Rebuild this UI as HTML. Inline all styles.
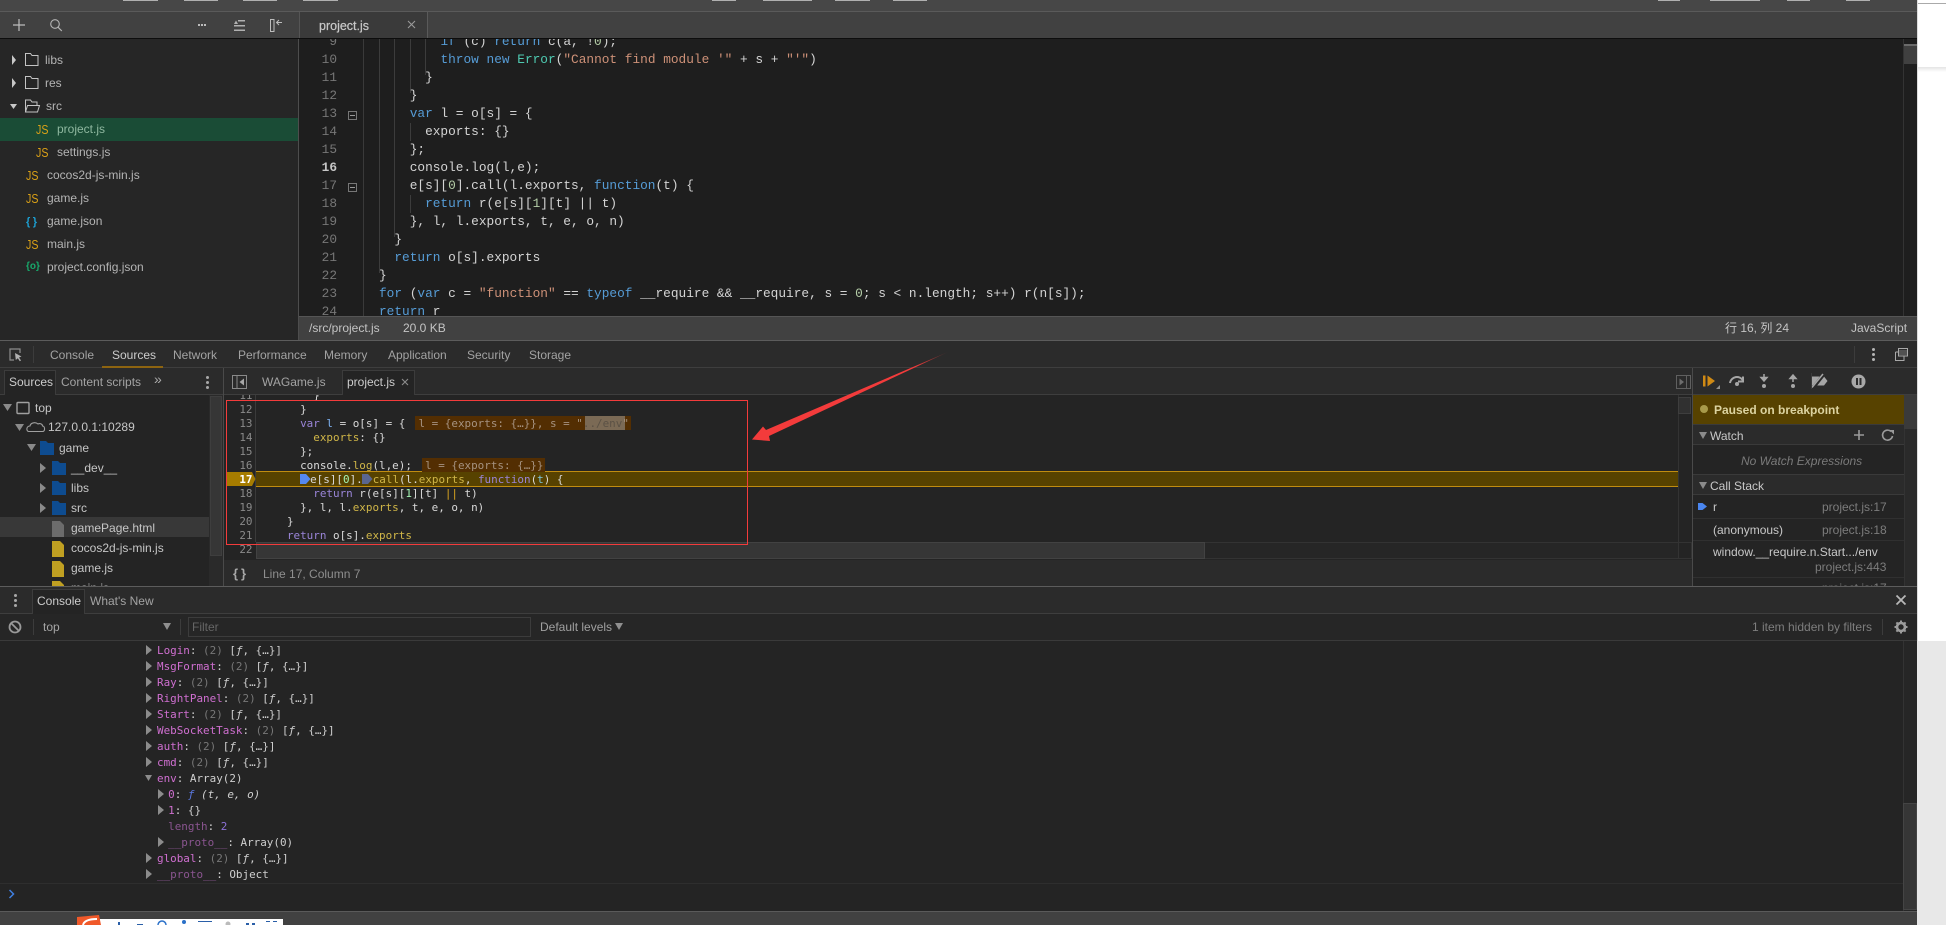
<!DOCTYPE html>
<html lang="en">
<head>
<meta charset="utf-8">
<title>DevTools</title>
<style>
html,body{margin:0;padding:0;width:1946px;height:925px;overflow:hidden;background:#fff}
body{position:relative;font-family:"Liberation Sans","Noto Sans CJK SC",sans-serif;font-size:12px;color:#aaa}
.a,.t,svg,pre{position:absolute}
.t{white-space:pre;line-height:16px;height:16px}
pre{margin:0;white-space:pre}
.b{position:absolute;overflow:hidden}
.ec{font-family:"Liberation Mono",monospace;font-size:12.8px;line-height:18px;color:#d4d4d4}
.dc{font-family:"DejaVu Sans Mono","Liberation Mono",monospace;font-size:10.93px;line-height:14px;color:#d9d9d9}
.cc{font-family:"DejaVu Sans Mono","Liberation Mono",monospace;font-size:10.93px;line-height:16px;color:#cfcfcf}
.k{color:#569cd6}.g{color:#4ec9b0}.s{color:#ce9178}.n{color:#b5cea8}
.K{color:#9a85d8}.v{color:#7fb4f5}.p{color:#d0b648}.N{color:#a4f4b4}.o{color:#d9a520}.T{color:#7cc8e0}
.m{color:#cf6fd0}.mm{color:#8a5590}.d{color:#777}.f{color:#5a78e0;font-style:italic}.i{font-style:italic}.l{color:#8d71d8}
.side{color:#b4b4b4;font-size:12px}
.tab{color:#a3a3a3;font-size:12px}
.grey{color:#7c7c7c}
.js{color:#d9a017;font-size:12.5px;transform:scaleX(.85);transform-origin:0 50%}
.st{color:#c4c4c4;font-size:12px;top:320px}
.top{position:absolute;top:0;height:1px;background:#b0b0b0}
</style>
</head>
<body>
<!-- right window background -->
<div class="a" style="left:1918px;top:3px;width:28px;height:1px;background:#aaa"></div>
<div class="a" style="left:1918px;top:67px;width:28px;height:5px;background:linear-gradient(#e4e4e4,#fff)"></div>
<div class="a" style="left:1917px;top:641px;width:29px;height:284px;background:#e8e8e8"></div>
<div class="a" style="left:1917px;top:0;width:1px;height:641px;background:#ddd"></div>

<div class="a" id="win" style="left:0;top:0;width:1917px;height:925px;background:#444;overflow:hidden">
  <!-- top strip -->
  <div class="a" style="left:0;top:0;width:1917px;height:12px;background:#474747;border-bottom:1px solid #5a5a5a;box-sizing:border-box"></div>
  <div class="top" style="left:123px;width:35px"></div>
  <div class="top" style="left:184px;width:34px"></div>
  <div class="top" style="left:243px;width:34px"></div>
  <div class="top" style="left:303px;width:35px"></div>
  <div class="top" style="left:712px;width:24px"></div>
  <div class="top" style="left:763px;width:49px"></div>
  <div class="top" style="left:835px;width:35px"></div>
  <div class="top" style="left:893px;width:34px"></div>
  <div class="top" style="left:1658px;width:22px"></div>
  <div class="top" style="left:1710px;width:50px"></div>
  <div class="top" style="left:1787px;width:23px"></div>
  <div class="top" style="left:1846px;width:24px"></div>

  <!-- sidebar toolbar -->
  <div class="a" style="left:0;top:12px;width:1917px;height:26px;background:#414141"></div>
  <div class="a" style="left:0;top:38px;width:1917px;height:1px;background:#0d0d0d"></div>
  <svg style="left:12px;top:18px" width="14" height="14" viewBox="0 0 14 14"><path d="M7 1v12M1 7h12" stroke="#bdbdbd" stroke-width="1.2" fill="none"/></svg>
  <svg style="left:49px;top:18px" width="14" height="14" viewBox="0 0 14 14"><circle cx="6" cy="6" r="4.3" stroke="#b5b5b5" stroke-width="1.1" fill="none"/><path d="M9 9.2l3.8 3.8" stroke="#b5b5b5" stroke-width="1.2"/></svg>
  <div class="a" style="left:198px;top:24px;width:8px;height:2px;background-image:linear-gradient(90deg,#bbb 2px,transparent 2px);background-size:3px 2px"></div>
  <svg style="left:233px;top:19px" width="13" height="13" viewBox="0 0 13 13"><path d="M5 1h7v1.5H5zM1 6h11v1.5H1zM1 10.500h11V12H1z" fill="#b0b0b0"/><path d="M3 1.500L5 5H1z" fill="#b0b0b0"/></svg>
  <svg style="left:269px;top:18px" width="15" height="15" viewBox="0 0 15 15"><rect x="1.500" y="1.500" width="3.500" height="12" stroke="#bdbdbd" stroke-width="1" fill="none"/><path d="M13 4.500H8M10 2L7.500 4.500 10 7" stroke="#bdbdbd" stroke-width="1" fill="none"/></svg>

  <!-- file tab -->
  <div class="a" style="left:299px;top:12px;width:129px;height:26px;background:#3a3a3a;border-left:1px solid #555;border-right:1px solid #5a5a5a;box-sizing:border-box"></div>
  <div class="t" style="left:319px;top:26px;margin-top:-8px;color:#c8c8c8;font-size:12.5px;-webkit-text-stroke:.2px #c8c8c8">project.js</div>
  <svg style="left:407px;top:30px;margin-top:-10px" width="9" height="9" viewBox="0 0 9 9"><path d="M1 1l7 7M8 1L1 8" stroke="#9a9a9a" stroke-width="1.1"/></svg>

  <!-- file tree -->
  <div class="a" style="left:0;top:39px;width:298px;height:301px;background:#262626"></div>
  <div class="a" style="left:0;top:118px;width:298px;height:23px;background:#1a4c36"></div>
  <div class="a" style="left:298px;top:39px;width:1px;height:301px;background:#4d4d4d"></div>
  <svg style="left:0;top:39px" width="298" height="240" viewBox="0 39 298 240">
    <path d="M12 55l4 5-4 5zM12 78l4 5-4 5z" fill="#c8c8c8"/>
    <path d="M10 104h7l-3.500 5z" fill="#c8c8c8"/>
    <path d="M25.500 53.500h5l1.500 2h6v10h-12.500zM25.500 76.500h5l1.500 2h6v10h-12.500z" stroke="#c4c4c4" fill="none"/>
    <path d="M25.500 112v-12h5l1.500 2h5v3M25.500 112l2-6.500h12l-2 6.500z" stroke="#c4c4c4" fill="none"/>
  </svg>
  <div class="t side" style="left:45px;top:52px">libs</div>
  <div class="t side" style="left:45px;top:75px">res</div>
  <div class="t side" style="left:46px;top:98px">src</div>
  <div class="t side" style="left:57px;top:121px;color:#8fb8a0">project.js</div>
  <div class="t side" style="left:57px;top:144px">settings.js</div>
  <div class="t side" style="left:47px;top:167px">cocos2d-js-min.js</div>
  <div class="t side" style="left:47px;top:190px">game.js</div>
  <div class="t side" style="left:47px;top:213px">game.json</div>
  <div class="t side" style="left:47px;top:236px">main.js</div>
  <div class="t side" style="left:47px;top:259px">project.config.json</div>
  <div class="t js" style="left:36px;top:122px">JS</div>
  <div class="t js" style="left:36px;top:145px">JS</div>
  <div class="t js" style="left:26px;top:168px">JS</div>
  <div class="t js" style="left:26px;top:191px">JS</div>
  <div class="t" style="left:26px;top:214px;color:#1d9ed0;font-size:11px;font-weight:bold;letter-spacing:2.500px">{}</div>
  <div class="t js" style="left:26px;top:237px">JS</div>
  <div class="t" style="left:26px;top:259px;color:#18a86b;font-size:10px;font-weight:bold">{o}</div>

  <!-- main editor -->
  <div class="b" style="left:299px;top:39px;width:1618px;height:277px;background:#1e1e1e">
    <pre class="ec" style="left:0;top:-6px;width:38px;text-align:right;color:#777"><span>9
10
11
12
13
14
15
</span><span style="color:#c6c6c6;font-weight:bold">16</span>
17
18
19
20
21
22
23
24</pre>
    <div class="a" style="left:64px;top:0;width:1px;height:277px;background:#3a3a3a"></div>
    <div class="a" style="left:80px;top:0;width:1px;height:234px;background:#3c3c3c"></div>
    <div class="a" style="left:95px;top:0;width:1px;height:198px;background:#3c3c3c"></div>
    <div class="a" style="left:111px;top:0;width:1px;height:54px;background:#3c3c3c"></div>
    <div class="a" style="left:111px;top:84px;width:1px;height:18px;background:#3c3c3c"></div>
    <div class="a" style="left:111px;top:156px;width:1px;height:18px;background:#3c3c3c"></div>
    <div class="a" style="left:126px;top:0;width:1px;height:36px;background:#3c3c3c"></div>
    <div class="a" style="left:49px;top:72px;width:9px;height:9px;border:1px solid #777;box-sizing:border-box"><div class="a" style="left:1px;top:3px;width:5px;height:1px;background:#999"></div></div>
    <div class="a" style="left:49px;top:144px;width:9px;height:9px;border:1px solid #777;box-sizing:border-box"><div class="a" style="left:1px;top:3px;width:5px;height:1px;background:#999"></div></div>
    <pre class="ec" style="left:80px;top:-6px">        <span class="k">if</span> (c) <span class="k">return</span> c(a, !<span class="n">0</span>);
        <span class="k">throw</span> <span class="k">new</span> <span class="g">Error</span>(<span class="s">"Cannot find module '"</span> + s + <span class="s">"'"</span>)
      }
    }
    <span class="k">var</span> l = o[s] = {
      exports: {}
    };
    console.log(l,e);
    e[s][<span class="n">0</span>].call(l.exports, <span class="k">function</span>(t) {
      <span class="k">return</span> r(e[s][<span class="n">1</span>][t] || t)
    }, l, l.exports, t, e, o, n)
  }
  <span class="k">return</span> o[s].exports
}
<span class="k">for</span> (<span class="k">var</span> c = <span class="s">"function"</span> == <span class="k">typeof</span> __require &amp;&amp; __require, s = <span class="n">0</span>; s &lt; n.length; s++) r(n[s]);
<span class="k">return</span> r</pre>
    <!-- scrollbar -->
    <div class="a" style="left:1604px;top:0;width:14px;height:277px;background:#1e1e1e;border-left:1px solid #333;box-sizing:border-box"></div>
    <div class="a" style="left:1605px;top:5px;width:13px;height:20px;background:#404040;border-top:2px solid #6a6a6a;box-sizing:border-box"></div>
  </div>

  <!-- editor status -->
  <div class="a" style="left:299px;top:316px;width:1618px;height:24px;background:#414141;border-top:1px solid #555;box-sizing:border-box"></div>
  <div class="t st" style="left:309px">/src/project.js</div>
  <div class="t st" style="left:403px">20.0 KB</div>
  <div class="t st" style="left:1725px">行 16, 列 24</div>
  <div class="t st" style="left:1851px">JavaScript</div>

  <!-- devtools -->
  <div class="a" style="left:0;top:340px;width:1917px;height:571px;background:#242424"></div>
  <div class="a" style="left:0;top:340px;width:1917px;height:1px;background:#5c5c5c"></div>
  <div class="a" style="left:0;top:341px;width:1917px;height:26px;background:#2b2b2b;border-bottom:1px solid #3e3e3e"></div>
  <svg style="left:8px;top:347px" width="15" height="16" viewBox="0 0 15 16"><path d="M6 13H2V2h10v4" stroke="#8d8d8d" fill="none" stroke-width="1.200"/><path d="M7 6l6.500 3.500-2.500 1 2 3-1.200.8-2-3-2 1.700z" fill="#b0b0b0"/></svg>
  <div class="a" style="left:33px;top:346px;width:1px;height:17px;background:#3c3c3c"></div>
  <div class="t tab" style="left:50px;top:347px">Console</div>
  <div class="t tab" style="left:112px;top:347px;color:#ccc">Sources</div>
  <div class="t tab" style="left:173px;top:347px">Network</div>
  <div class="t tab" style="left:238px;top:347px">Performance</div>
  <div class="t tab" style="left:324px;top:347px">Memory</div>
  <div class="t tab" style="left:388px;top:347px">Application</div>
  <div class="t tab" style="left:467px;top:347px">Security</div>
  <div class="t tab" style="left:529px;top:347px">Storage</div>
  <div class="a" style="left:102px;top:366px;width:61px;height:2px;background:#8d6410"></div>
  <div class="a" style="left:1854px;top:346px;width:1px;height:17px;background:#3c3c3c"></div>
  <div class="a" style="left:1872px;top:348px;width:3px;height:3px;background:#b5b5b5;border-radius:2px;box-shadow:0 5px 0 #b5b5b5,0 10px 0 #b5b5b5"></div>
  <svg style="left:1895px;top:348px" width="13" height="13" viewBox="0 0 13 13"><path d="M3.500.5h9v7.500h-9zM.5 4h3M.5 4v8.500h8.500V8" stroke="#a8a8a8" fill="none"/><rect x="4" y="2" width="8" height="5" fill="#a8a8a8" opacity=".3"/></svg>

  <!-- second row -->
  <div class="a" style="left:0;top:368px;width:1917px;height:26px;background:#2b2b2b;border-bottom:1px solid #3e3e3e"></div>
  <div class="a" style="left:4px;top:370px;width:52px;height:25px;background:#242424;border:1px solid #3c3c3c;border-bottom:0;box-sizing:border-box"></div>
  <div class="t tab" style="left:9px;top:374px;color:#ccc">Sources</div>
  <div class="t tab" style="left:61px;top:374px">Content scripts</div>
  <div class="t tab" style="left:154px;top:371px;font-size:14px;color:#aaa">»</div>
  <div class="a" style="left:206px;top:376px;width:3px;height:3px;background:#a8a8a8;border-radius:2px;box-shadow:0 5px 0 #a8a8a8,0 10px 0 #a8a8a8"></div>
  <div class="a" style="left:223px;top:368px;width:1px;height:218px;background:#4a4a4a"></div>
  <svg style="left:232px;top:375px" width="15" height="14" viewBox="0 0 15 14"><rect x=".5" y=".5" width="14" height="13" stroke="#8a8a8a" fill="none"/><path d="M5 .5v13" stroke="#8a8a8a"/><path d="M12 3.500v7L7.500 7z" fill="#a8a8a8"/></svg>
  <div class="t tab" style="left:262px;top:374px">WAGame.js</div>
  <div class="a" style="left:342px;top:370px;width:73px;height:25px;background:#242424;border:1px solid #3c3c3c;border-bottom:0;box-sizing:border-box"></div>
  <div class="t tab" style="left:347px;top:374px;color:#ccc">project.js</div>
  <svg style="left:401px;top:378px" width="8" height="8" viewBox="0 0 8 8"><path d="M1 1l6 6M7 1L1 7" stroke="#8b8b8b" stroke-width="1.100"/></svg>
  <svg style="left:1676px;top:375px" width="15" height="14" viewBox="0 0 15 14"><rect x=".5" y=".5" width="14" height="13" stroke="#606060" fill="none"/><path d="M10.500.5v13" stroke="#606060"/><path d="M3.500 3.500v7L8 7z" fill="#6d6d6d"/></svg>

  <!-- navigator tree -->
  <div class="a" style="left:0;top:395px;width:223px;height:191px;background:#242424;overflow:hidden">
    <div class="a" style="left:0;top:122px;width:209px;height:20px;background:#383838"></div>
    <svg style="left:0;top:0" width="209" height="191" viewBox="0 395 209 191">
      <path d="M3 404h9l-4.500 7zM15 424h9l-4.500 7zM27 444h9l-4.500 7z" fill="#8a8a8a"/>
      <path d="M40 463v10l6-5zM40 483v10l6-5zM40 503v10l6-5z" fill="#8a8a8a"/>
      <rect x="17" y="402.500" width="12" height="11" rx="1" stroke="#a0a0a0" stroke-width="1.400" fill="none"/>
      <path d="M29 431.500c-3 0-3-5.500 1-5.500.5-3 5-4.500 8-2 2-1 4.500 0 4.500 2 2.500 0 3 5.500 0 5.500z" stroke="#a0a0a0" stroke-width="1.100" fill="none"/>
      <path d="M40 441h6l2 2h6v12H40zM52 461h6l2 2h6v12H52zM52 481h6l2 2h6v12H52zM52 501h6l2 2h6v12H52z" fill="#0e4c90"/>
      <path d="M52 521h8l4 4v12H52z" fill="#6c6c6c"/>
      <path d="M52 541h8l4 4v12H52zM52 561h8l4 4v12H52zM52 581h8l4 4v12H52z" fill="#c0a022"/>
    </svg>
    <div class="t" style="left:35px;top:5px;color:#c6c6c6">top</div>
    <div class="t" style="left:48px;top:24px;color:#c6c6c6">127.0.0.1:10289</div>
    <div class="t" style="left:59px;top:45px;color:#c6c6c6">game</div>
    <div class="t" style="left:71px;top:65px;color:#c6c6c6">__dev__</div>
    <div class="t" style="left:71px;top:85px;color:#c6c6c6">libs</div>
    <div class="t" style="left:71px;top:105px;color:#c6c6c6">src</div>
    <div class="t" style="left:71px;top:125px;color:#c6c6c6">gamePage.html</div>
    <div class="t" style="left:71px;top:145px;color:#c6c6c6">cocos2d-js-min.js</div>
    <div class="t" style="left:71px;top:165px;color:#c6c6c6">game.js</div>
    <div class="t" style="left:71px;top:185px;color:#c6c6c6">main.js</div>
    <div class="a" style="left:209px;top:0;width:14px;height:191px;background:#2a2a2a"></div>
    <div class="a" style="left:210px;top:1px;width:12px;height:160px;background:#363636;border:1px solid #3e3e3e;box-sizing:border-box"></div>
  </div>

  <!-- sources editor -->
  <div class="b" style="left:224px;top:395px;width:1468px;height:165px;background:#242424">
    <div class="a" style="left:31px;top:0;width:1px;height:147px;background:#3a3a3a"></div>
    <pre class="dc" style="left:0;top:-6.5px;width:28.500px;text-align:right;color:#8a8a8a">11
12
13
14
15
16

18
19
20
21
22</pre>
    <!-- paused line -->
    <div class="a" style="left:32px;top:76px;width:1436px;height:16px;background:#574200;border-top:1px solid #c08c10;border-bottom:1px solid #c08c10;box-sizing:border-box"></div>
    <svg style="left:3px;top:77px" width="30" height="14" viewBox="0 0 30 14"><path d="M0 0h25l3.500 7-3.500 7H0z" fill="#a67c00"/></svg>
    <pre class="dc" style="left:0;top:-6.5px;width:28.500px;text-align:right;color:#fff;font-weight:bold">






17</pre>
    <!-- inline values -->
    <div class="a" style="left:191px;top:21px;width:216px;height:14px;background:#532e02"></div>
    <div class="a" style="left:361px;top:21px;width:40px;height:14px;background:#7b6a55"></div>
    <div class="a" style="left:198px;top:63px;width:123px;height:14px;background:#532e02"></div>
    <pre class="dc" style="left:49.800px;top:-6.500px">      }
    }
    <span class="K">var</span> <span class="v">l</span> = o[s] = {  <span style="color:#a59280">l = {exports: {…}}, s = "</span><span style="color:#5b5145">../env</span><span style="color:#a59280">"</span>
      <span class="p">exports</span>: {}
    };
    console.<span class="p">log</span>(l,e);  <span style="color:#a59280">l = {exports: {…}}</span></pre>
    <pre class="dc" style="left:49.800px;top:-6.500px"><span style="visibility:hidden">
 
 
 
 
 
</span>    <span style="display:inline-block;width:10px"></span>e[s][<span class="N">0</span>].<span style="display:inline-block;width:10px"></span><span class="p">call</span>(l.<span class="p">exports</span>, <span class="K">function</span>(<span class="T">t</span>) {
      <span class="K">return</span> r(e[s][<span class="N">1</span>][t] <span class="o">||</span> t)
    }, l, l.<span class="p">exports</span>, t, e, o, n)
  }
  <span class="K">return</span> o[s].<span class="p">exports</span></pre>
    <svg style="left:76px;top:78px" width="11" height="12" viewBox="0 0 11 12"><path d="M0 1h6l4.500 5L6 11H0z" fill="#5588f0"/></svg>
    <svg style="left:138px;top:78px" width="11" height="12" viewBox="0 0 11 12"><path d="M0 1h6l4.500 5L6 11H0z" fill="#5a6690"/></svg>
    <!-- scroll bars -->
    <div class="a" style="left:1454px;top:0;width:14px;height:147px;background:#242424;border-left:1px solid #333;box-sizing:border-box"></div>
    <div class="a" style="left:1454px;top:2px;width:13px;height:17px;background:#303030;border:1px solid #3e3e3e;box-sizing:border-box"></div>
    <div class="a" style="left:32px;top:147px;width:1422px;height:17px;background:#262626;border-top:1px solid #333;border-bottom:1px solid #333;box-sizing:border-box"></div>
    <div class="a" style="left:32px;top:147px;width:949px;height:17px;background:#363636;border:1px solid #424242;box-sizing:border-box"></div>
    <div class="a" style="left:1454px;top:147px;width:14px;height:17px;background:#242424;border:1px solid #333;box-sizing:border-box"></div>
  </div>
  <div class="a" style="left:224px;top:560px;width:1468px;height:26px;background:#2b2b2b"></div>
  <div class="t" style="left:233px;top:566px;color:#a8a8a8;font-size:13px;font-weight:bold;letter-spacing:3px">{}</div>
  <div class="t grey" style="left:263px;top:566px;color:#8f8f8f">Line 17, Column 7</div>

  <!-- debugger sidebar -->
  <div class="a" style="left:1692px;top:368px;width:1px;height:218px;background:#4a4a4a"></div>
  <svg style="left:1700px;top:372px" width="130" height="18" viewBox="0 0 130 18">
    <path d="M3 3.500h2.500v11H3zM7.500 3.500L15 9l-7.500 5.500z" fill="#d08a14"/><path d="M20 17l-4 0 4-4z" fill="#909090"/>
    <path d="M30 11a7 7 0 0 1 13-2.500M43 4.500v5h-5" stroke="#a6a6a6" stroke-width="2" fill="none"/><circle cx="37" cy="12" r="2" fill="#a6a6a6"/>
    <path d="M64 2v6M61 5.500L64 9l3-3.500z" stroke="#a6a6a6" stroke-width="1.500" fill="#a6a6a6"/><circle cx="64" cy="14" r="2" fill="#a6a6a6"/>
    <path d="M93 10V4M90 6.500L93 3l3 3.500z" stroke="#a6a6a6" stroke-width="1.500" fill="#a6a6a6"/><circle cx="93" cy="14" r="2" fill="#a6a6a6"/>
    <path d="M111 4.500h13l3.500 4.500-3.500 4.500h-13z" fill="#a6a6a6"/><path d="M113 16L124 2" stroke="#2b2b2b" stroke-width="3.500"/><path d="M112 15.500L123 2" stroke="#a6a6a6" stroke-width="1.500"/>
  </svg>
  <div class="a" style="left:1811px;top:373px;width:1px;height:16px;background:#3c3c3c"></div>
  <svg style="left:1851px;top:374px" width="15" height="15" viewBox="0 0 15 15"><circle cx="7.500" cy="7.500" r="7" fill="#a8a8a8"/><path d="M5 4h2v7H5zM8.500 4h2v7h-2z" fill="#2b2b2b"/></svg>

  <div class="a" style="left:1693px;top:395px;width:224px;height:191px;background:#242424;overflow:hidden">
    <div class="a" style="left:0;top:0;width:211px;height:29px;background:#574200"></div>
    <div class="a" style="left:7px;top:10px;width:8px;height:8px;border-radius:50%;background:#a89a4a"></div>
    <div class="t" style="left:21px;top:7px;font-weight:bold;color:#dcd3a0">Paused on breakpoint</div>
    <div class="a" style="left:0;top:29px;width:211px;height:21px;background:#2b2b2b;border-top:1px solid #3a3a3a;border-bottom:1px solid #3a3a3a;box-sizing:border-box"></div>
    <svg style="left:6px;top:37px" width="8" height="7" viewBox="0 0 8 7"><path d="M0 0h8L4 7z" fill="#8a8a8a"/></svg>
    <div class="t" style="left:17px;top:33px;color:#c8c8c8">Watch</div>
    <svg style="left:159px;top:33px" width="14" height="14" viewBox="0 0 14 14"><path d="M7 2v10M2 7h10" stroke="#9a9a9a" stroke-width="1.600"/></svg>
    <svg style="left:188px;top:33px" width="14" height="14" viewBox="0 0 14 14"><path d="M11.500 8A5 5 0 1 1 10 3.500" stroke="#9a9a9a" stroke-width="1.600" fill="none"/><path d="M8.500 2h4.500v4.500z" fill="#9a9a9a"/></svg>
    <div class="t i" style="left:48px;top:58px;color:#7a7a7a">No Watch Expressions</div>
    <div class="a" style="left:0;top:79px;width:211px;height:21px;background:#2b2b2b;border-top:1px solid #3a3a3a;border-bottom:1px solid #3a3a3a;box-sizing:border-box"></div>
    <svg style="left:6px;top:87px" width="8" height="7" viewBox="0 0 8 7"><path d="M0 0h8L4 7z" fill="#8a8a8a"/></svg>
    <div class="t" style="left:17px;top:83px;color:#c8c8c8">Call Stack</div>
    <svg style="left:5px;top:107px" width="9" height="9" viewBox="0 0 9 9"><path d="M0 1h4.500L9 4.500 4.500 8H0z" fill="#4a86f0"/></svg>
    <div class="t" style="left:20px;top:104px;color:#c8c8c8">r</div>
    <div class="t grey" style="left:129px;top:104px">project.js:17</div>
    <div class="a" style="left:0;top:123px;width:211px;height:1px;background:#303030"></div>
    <div class="t" style="left:20px;top:127px;color:#c8c8c8">(anonymous)</div>
    <div class="t grey" style="left:129px;top:127px">project.js:18</div>
    <div class="a" style="left:0;top:145px;width:211px;height:1px;background:#303030"></div>
    <div class="t" style="left:20px;top:149px;color:#c8c8c8">window.__require.n.Start.../env</div>
    <div class="t grey" style="left:122px;top:164px">project.js:443</div>
    <div class="a" style="left:0;top:182px;width:211px;height:1px;background:#303030"></div>
    <div class="t grey" style="left:129px;top:185px">project.js:17</div>
    <div class="a" style="left:211px;top:0;width:13px;height:191px;background:#2a2a2a;border-left:1px solid #333;box-sizing:border-box"></div>
    <div class="a" style="left:211px;top:0;width:13px;height:34px;background:#3a3a3a"></div>
  </div>

  <!-- drawer -->
  <div class="a" style="left:0;top:586px;width:1917px;height:1px;background:#5c5c5c"></div>
  <div class="a" style="left:0;top:587px;width:1917px;height:26px;background:#2b2b2b;border-bottom:1px solid #3e3e3e"></div>
  <div class="a" style="left:14px;top:594px;width:3px;height:3px;background:#a8a8a8;border-radius:2px;box-shadow:0 5px 0 #a8a8a8,0 10px 0 #a8a8a8"></div>
  <div class="a" style="left:32px;top:589px;width:53px;height:25px;background:#242424;border:1px solid #3c3c3c;border-bottom:0;box-sizing:border-box"></div>
  <div class="t tab" style="left:37px;top:593px;color:#ccc">Console</div>
  <div class="t tab" style="left:90px;top:593px">What's New</div>
  <svg style="left:1895px;top:594px" width="12" height="12" viewBox="0 0 12 12"><path d="M1.500 1.500l9 9M10.500 1.500l-9 9" stroke="#b8b8b8" stroke-width="1.800"/></svg>

  <div class="a" style="left:0;top:614px;width:1917px;height:27px;background:#262626;border-bottom:1px solid #3a3a3a;box-sizing:border-box"></div>
  <svg style="left:8px;top:620px" width="14" height="14" viewBox="0 0 14 14"><circle cx="7" cy="7" r="5.500" stroke="#999" stroke-width="1.800" fill="none"/><path d="M3 3l8 8" stroke="#999" stroke-width="1.800"/></svg>
  <div class="a" style="left:33px;top:619px;width:1px;height:16px;background:#3c3c3c"></div>
  <div class="t grey" style="left:43px;top:619px;color:#a5a5a5">top</div>
  <svg style="left:163px;top:623px" width="8" height="7" viewBox="0 0 8 7"><path d="M0 0h8L4 7z" fill="#8f8f8f"/></svg>
  <div class="a" style="left:180px;top:619px;width:1px;height:16px;background:#3c3c3c"></div>
  <div class="a" style="left:188px;top:617px;width:343px;height:20px;background:#262626;border:1px solid #3c3c3c;box-sizing:border-box"></div>
  <div class="t" style="left:192px;top:619px;color:#666">Filter</div>
  <div class="t" style="left:540px;top:619px;color:#a0a0a0">Default levels</div>
  <svg style="left:615px;top:623px" width="8" height="7" viewBox="0 0 8 7"><path d="M0 0h8L4 7z" fill="#8f8f8f"/></svg>
  <div class="t" style="left:1752px;top:619px;color:#7e7e7e">1 item hidden by filters</div>
  <div class="a" style="left:1882px;top:619px;width:1px;height:16px;background:#3c3c3c"></div>
  <svg style="left:1894px;top:620px" width="14" height="14" viewBox="0 0 14 14"><circle cx="7" cy="7" r="4" fill="none" stroke="#9c9c9c" stroke-width="2.600"/><path d="M7 .5v3M7 10.500v3M.5 7h3M10.500 7h3M2.400 2.400l2.100 2.100M9.500 9.500l2.100 2.100M2.400 11.600l2.100-2.100M9.500 4.500l2.100-2.100" stroke="#9c9c9c" stroke-width="2"/></svg>

  <!-- console output -->
  <div class="a" style="left:0;top:641px;width:1917px;height:270px;background:#242424"></div>
  <pre class="cc" style="left:157px;top:643px"><span class="m">Login</span>: <span class="d">(2)</span> [<span class="i">ƒ</span>, {…}]
<span class="m">MsgFormat</span>: <span class="d">(2)</span> [<span class="i">ƒ</span>, {…}]
<span class="m">Ray</span>: <span class="d">(2)</span> [<span class="i">ƒ</span>, {…}]
<span class="m">RightPanel</span>: <span class="d">(2)</span> [<span class="i">ƒ</span>, {…}]
<span class="m">Start</span>: <span class="d">(2)</span> [<span class="i">ƒ</span>, {…}]
<span class="m">WebSocketTask</span>: <span class="d">(2)</span> [<span class="i">ƒ</span>, {…}]
<span class="m">auth</span>: <span class="d">(2)</span> [<span class="i">ƒ</span>, {…}]
<span class="m">cmd</span>: <span class="d">(2)</span> [<span class="i">ƒ</span>, {…}]
<span class="m">env</span>: Array(2)
  <span class="m" style="margin-left:-2px">0</span>: <span class="f">ƒ</span> <span class="i">(t, e, o)</span>
  <span class="m" style="margin-left:-2px">1</span>: {}
  <span class="mm" style="margin-left:-2px">length</span>: <span class="l">2</span>
  <span class="mm" style="margin-left:-2px">__proto__</span>: Array(0)
<span class="m">global</span>: <span class="d">(2)</span> [<span class="i">ƒ</span>, {…}]
<span class="mm">__proto__</span>: Object</pre>
  <svg style="left:145px;top:642px" width="30" height="240" viewBox="0 642 30 240">
    <path d="M1 645l6 5-6 5zM1 661l6 5-6 5zM1 677l6 5-6 5zM1 693l6 5-6 5zM1 709l6 5-6 5zM1 725l6 5-6 5zM1 741l6 5-6 5zM1 757l6 5-6 5zM1 853l6 5-6 5zM1 869l6 5-6 5z" fill="#8c8c8c"/>
    <path d="M0 775h7l-3.500 6z" fill="#8c8c8c"/>
    <path d="M13 789l6 5-6 5zM13 805l6 5-6 5zM13 837l6 5-6 5z" fill="#8c8c8c"/>
  </svg>
  <div class="a" style="left:0;top:883px;width:1903px;height:1px;background:#2e2e2e"></div>
  <svg style="left:8px;top:889px" width="7" height="10" viewBox="0 0 7 10"><path d="M1.500 1l4 4-4 4" stroke="#3f7fe0" stroke-width="1.500" fill="none"/></svg>
  <div class="a" style="left:1903px;top:641px;width:14px;height:270px;background:#262626;border-left:1px solid #333;box-sizing:border-box"></div>
  <div class="a" style="left:1903px;top:803px;width:14px;height:107px;background:#363636;border:1px solid #444;box-sizing:border-box"></div>

  <!-- bottom bar -->
  <div class="a" style="left:0;top:911px;width:1917px;height:14px;background:#414141;border-top:1px solid #5a5a5a;box-sizing:border-box"></div>
  <div class="a" style="left:100px;top:919px;width:183px;height:6px;background:#fff"></div>
  <svg style="left:77px;top:915px" width="26" height="10" viewBox="0 0 26 10"><path d="M0 2L22 0l2 10H0z" fill="#f0592a"/><path d="M6 10c1-4 6-6 14-6" stroke="#fff" stroke-width="2" fill="none"/></svg>
  <svg style="left:100px;top:919px" width="183" height="6" viewBox="0 0 183 6">
    <path d="M18 3h2v3h-2zM37 5h6v1h-6z" fill="#2a5fa8"/>
    <circle cx="62" cy="6" r="4" stroke="#2a70c8" stroke-width="1.500" fill="none"/>
    <circle cx="84" cy="3" r="2" fill="#2a70c8"/>
    <path d="M98 2h14v1h-14z" fill="#2a5fa8"/>
    <circle cx="128" cy="5" r="2.500" fill="#bbb"/>
    <path d="M146 4h3v2h-3zM152 4h3v2h-3zM166 2h4v1h-4zM173 2h4v1h-4z" fill="#2a5fa8"/>
  </svg>

  <!-- red annotation -->
  <div class="a" style="left:226px;top:400px;width:522px;height:145px;border:1.500px solid #f33b3b;box-sizing:border-box"></div>
  <svg style="left:745px;top:345px" width="215" height="105" viewBox="745 345 215 105">
    <defs><linearGradient id="rg" x1="948" y1="352" x2="915" y2="366" gradientUnits="userSpaceOnUse"><stop offset="0" stop-color="#f33b3b" stop-opacity=".15"/><stop offset="1" stop-color="#f33b3b"/></linearGradient></defs>
    <path d="M948 352L766 430 763 426.500 752 439.500 770 441 769 436z" fill="url(#rg)"/>
  </svg>
</div>
</body>
</html>
